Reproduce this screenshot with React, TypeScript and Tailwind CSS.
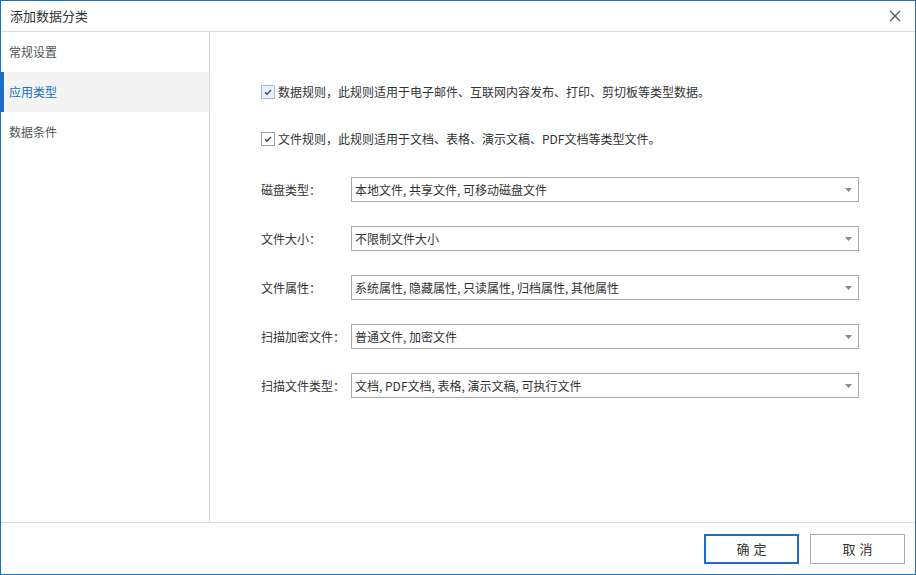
import React from "react";

const font = { fontFamily: '"Microsoft YaHei", "Noto Sans CJK SC", "Noto Sans", sans-serif' };

function Check({ active }: { active?: boolean }) {
  return (
    <span
      className={`w-[14px] h-[14px] border flex items-center justify-center shrink-0 ${
        active ? "border-[#9dbde3] bg-[#e8f1fb]" : "border-[#a0a0a0] bg-white"
      }`}
    >
      <svg width="10" height="10" viewBox="0 0 10 10">
        <path d="M2 5.2 L4 7.2 L8 3" fill="none" stroke="#444" strokeWidth="1.3" />
      </svg>
    </span>
  );
}

function Select({ label, value }: { label: string; value: string }) {
  return (
    <div className="flex items-center h-[25px]">
      <div className="w-[90px] text-[12px] text-[#333]">{label}</div>
      <div className="w-[508px] h-[25px] border border-[#a9a9a9] flex items-center justify-between pl-[3px] pr-[6px]">
        <span className="text-[12px] text-[#333]">{value}</span>
        <svg width="7" height="4" viewBox="0 0 7 4">
          <path d="M0 0 H7 L3.5 4 Z" fill="#8a8a8a" />
        </svg>
      </div>
    </div>
  );
}

export default function App() {
  return (
    <div style={font} className="w-[916px] h-[575px] border border-[#1a6fc4] bg-white flex flex-col">
      <div className="h-[31px] border-b border-[#dcdcdc] flex items-center justify-between pl-[9px] pr-[14px] shrink-0">
        <span className="text-[13px] text-[#333]">添加数据分类</span>
        <svg width="12" height="12" viewBox="0 0 12 12">
          <path d="M1 1 L11 11 M11 1 L1 11" stroke="#555" strokeWidth="1.2" />
        </svg>
      </div>
      <div className="flex-1 flex min-h-0">
        <div className="w-[209px] border-r border-[#dcdcdc] flex flex-col shrink-0">
          <div className="h-[40px] flex items-center pl-[8px] text-[12px] text-[#555]">常规设置</div>
          <div className="h-[40px] flex items-center bg-[#f4f4f4] border-l-[4px] border-[#1a6fc4] -ml-px pl-[5px] text-[12px] text-[#1a6fc4]">
            应用类型
          </div>
          <div className="h-[40px] flex items-center pl-[8px] text-[12px] text-[#555]">数据条件</div>
        </div>
        <div className="flex-1 pl-[51px] pt-[53px] flex flex-col">
          <div className="flex items-center gap-[3px] h-[14px]">
            <Check active />
            <span className="text-[12px] text-[#333]">数据规则，此规则适用于电子邮件、互联网内容发布、打印、剪切板等类型数据。</span>
          </div>
          <div className="flex items-center gap-[3px] h-[14px] mt-[33px]">
            <Check />
            <span className="text-[12px] text-[#333]">文件规则，此规则适用于文档、表格、演示文稿、PDF文档等类型文件。</span>
          </div>
          <div className="flex flex-col gap-[24px] mt-[31px]">
            <Select label="磁盘类型：" value="本地文件, 共享文件, 可移动磁盘文件" />
            <Select label="文件大小：" value="不限制文件大小" />
            <Select label="文件属性：" value="系统属性, 隐藏属性, 只读属性, 归档属性, 其他属性" />
            <Select label="扫描加密文件：" value="普通文件, 加密文件" />
            <Select label="扫描文件类型：" value="文档, PDF文档, 表格, 演示文稿, 可执行文件" />
          </div>
        </div>
      </div>
      <div className="h-[52px] border-t border-[#dcdcdc] flex items-center justify-end gap-[11px] pr-[10px] shrink-0">
        <button className="w-[95px] h-[30px] border-2 border-[#1a6fc4] text-[13px] text-[#333] tracking-[4px] pl-[4px]">确定</button>
        <button className="w-[95px] h-[30px] border border-[#aaaaaa] text-[13px] text-[#333] tracking-[4px] pl-[4px]">取消</button>
      </div>
    </div>
  );
}
